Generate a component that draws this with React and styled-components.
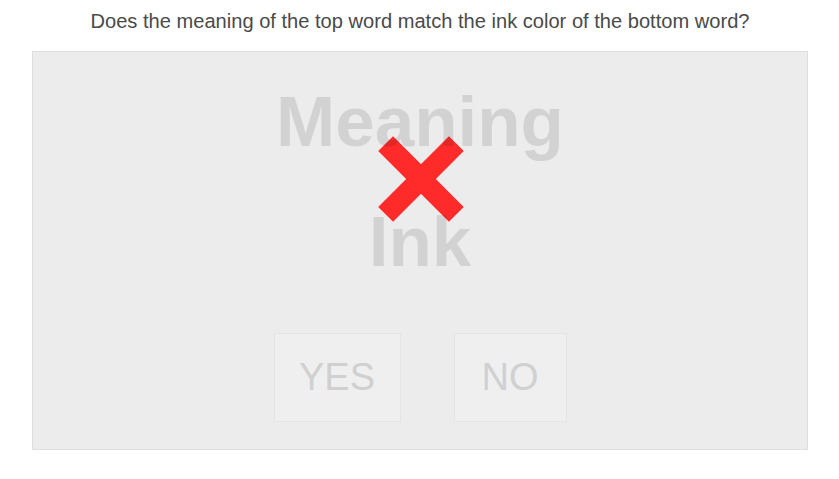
import React from "react";
import styled, { createGlobalStyle } from "styled-components";

const Global = createGlobalStyle`
  html, body { margin: 0; padding: 0; background: #ffffff; }
  body { font-family: "Liberation Sans", Arial, sans-serif; }
`;

const Page = styled.div`
  width: 839px;
  height: 479px;
  display: flex;
  flex-direction: column;
  align-items: flex-start;
  padding-left: 32px;
  box-sizing: border-box;
`;

const Question = styled.h1`
  margin: 0;
  width: 776px;
  height: 51px;
  display: flex;
  align-items: center;
  justify-content: center;
  font-size: 20.1px;
  font-weight: 400;
  color: #4a4a4a;
  padding-bottom: 8px;
  box-sizing: border-box;
`;

const Panel = styled.div`
  position: relative;
  width: 776px;
  height: 399px;
  box-sizing: border-box;
  background: #ececec;
  border: 1px solid #dedede;
  display: flex;
  flex-direction: column;
  align-items: center;
  padding-top: 34px;
`;

const Word = styled.div`
  font-size: 71px;
  line-height: 71px;
  font-weight: 700;
  color: rgba(0, 0, 0, 0.11);
  position: relative;
  z-index: 2;
  margin-bottom: ${(p) => p.$gap || 0}px;
`;

const Cross = styled.svg`
  position: absolute;
  left: 344px;
  top: 83px;
  width: 88px;
  height: 88px;
  z-index: 1;
`;

const Buttons = styled.div`
  display: flex;
  gap: 53px;
  margin-top: 56px;
`;

const Choice = styled.button`
  height: 89px;
  width: ${(p) => p.$w}px;
  box-sizing: border-box;
  background: #efefef;
  border: 1px solid #e4e4e4;
  color: #d0d0d0;
  font-family: "Liberation Sans", Arial, sans-serif;
  font-size: 38px;
  font-weight: 400;
  padding: 0;
  display: flex;
  align-items: center;
  justify-content: center;
`;

export default function App() {
  return (
    <Page>
      <Global />
      <Question>Does the meaning of the top word match the ink color of the bottom word?</Question>
      <Panel>
        <Word $gap={49}>Meaning</Word>
        <Word>Ink</Word>
        <Cross viewBox="0 0 88 88">
          <g fill="#ff2b2b">
            <rect x="-6" y="33.5" width="100" height="21" transform="rotate(45 44 44)" />
            <rect x="-6" y="33.5" width="100" height="21" transform="rotate(-45 44 44)" />
          </g>
        </Cross>
        <Buttons>
          <Choice $w={127}>YES</Choice>
          <Choice $w={113}>NO</Choice>
        </Buttons>
      </Panel>
    </Page>
  );
}
